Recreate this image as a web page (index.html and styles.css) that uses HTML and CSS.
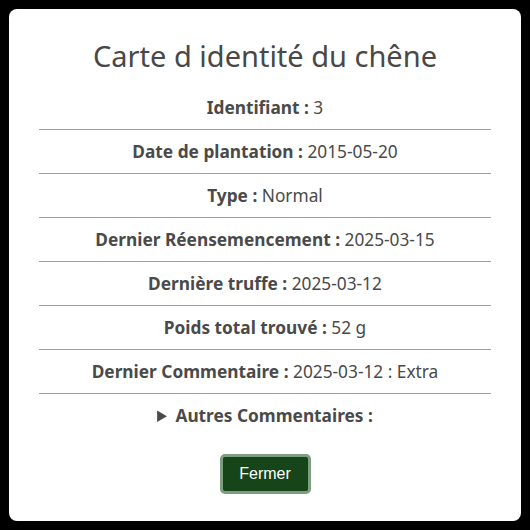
FILE: index.html
```html
<!DOCTYPE html>
<html lang="fr">
<head>
<meta charset="utf-8">
<link rel="stylesheet" href="styles.css">
</head>
<body>
<div class="card">
  <h2 class="title">Carte d identité du chêne</h2>
  <div class="rows">
    <div class="row"><b>Identifiant :</b> 3</div>
    <div class="row"><b>Date de plantation :</b> 2015-05-20</div>
    <div class="row"><b>Type :</b> Normal</div>
    <div class="row"><b>Dernier Réensemencement :</b> 2025-03-15</div>
    <div class="row"><b>Dernière truffe :</b> 2025-03-12</div>
    <div class="row"><b>Poids total trouvé :</b> 52 g</div>
    <div class="row"><b>Dernier Commentaire :</b> 2025-03-12 : Extra</div>
    <details class="row more"><summary><b>Autres Commentaires :</b></summary></details>
  </div>
  <div class="actions"><button class="btn">Fermer</button></div>
</div>
</body>
</html>
```
FILE: styles.css
```css
html, body {
  margin: 0;
  padding: 0;
  background: #000;
}
body {
  padding: 9px;
  font-family: "Noto Sans", "Open Sans", sans-serif;
  color: #4a4a4a;
}
.card {
  background: #fff;
  border-radius: 8px;
  width: 512px;
  height: 512px;
  box-sizing: border-box;
  padding: 29px 30px 0;
}
.title {
  margin: 0;
  font-size: 29px;
  line-height: 36px;
  font-weight: 400;
  text-align: center;
  color: #484848;
}
.rows {
  margin-top: 12px;
}
.row {
  text-align: center;
  font-size: 17.3px;
  line-height: 23px;
  padding: 10px 0;
  border-bottom: 1px solid #a0a0a0;
}
.row b {
  font-weight: 700;
}
.row.more {
  border-bottom: none;
}
.more summary {
  cursor: pointer;
}
.actions {
  display: flex;
  justify-content: center;
  margin-top: 17px;
}
.btn {
  font-family: "Liberation Sans", Arial, sans-serif;
  font-size: 16px;
  color: #fff;
  background: #17451a;
  border: 3px solid #7d9e7f;
  border-radius: 5px;
  width: 91px;
  height: 40px;
  padding: 0;
}
```
